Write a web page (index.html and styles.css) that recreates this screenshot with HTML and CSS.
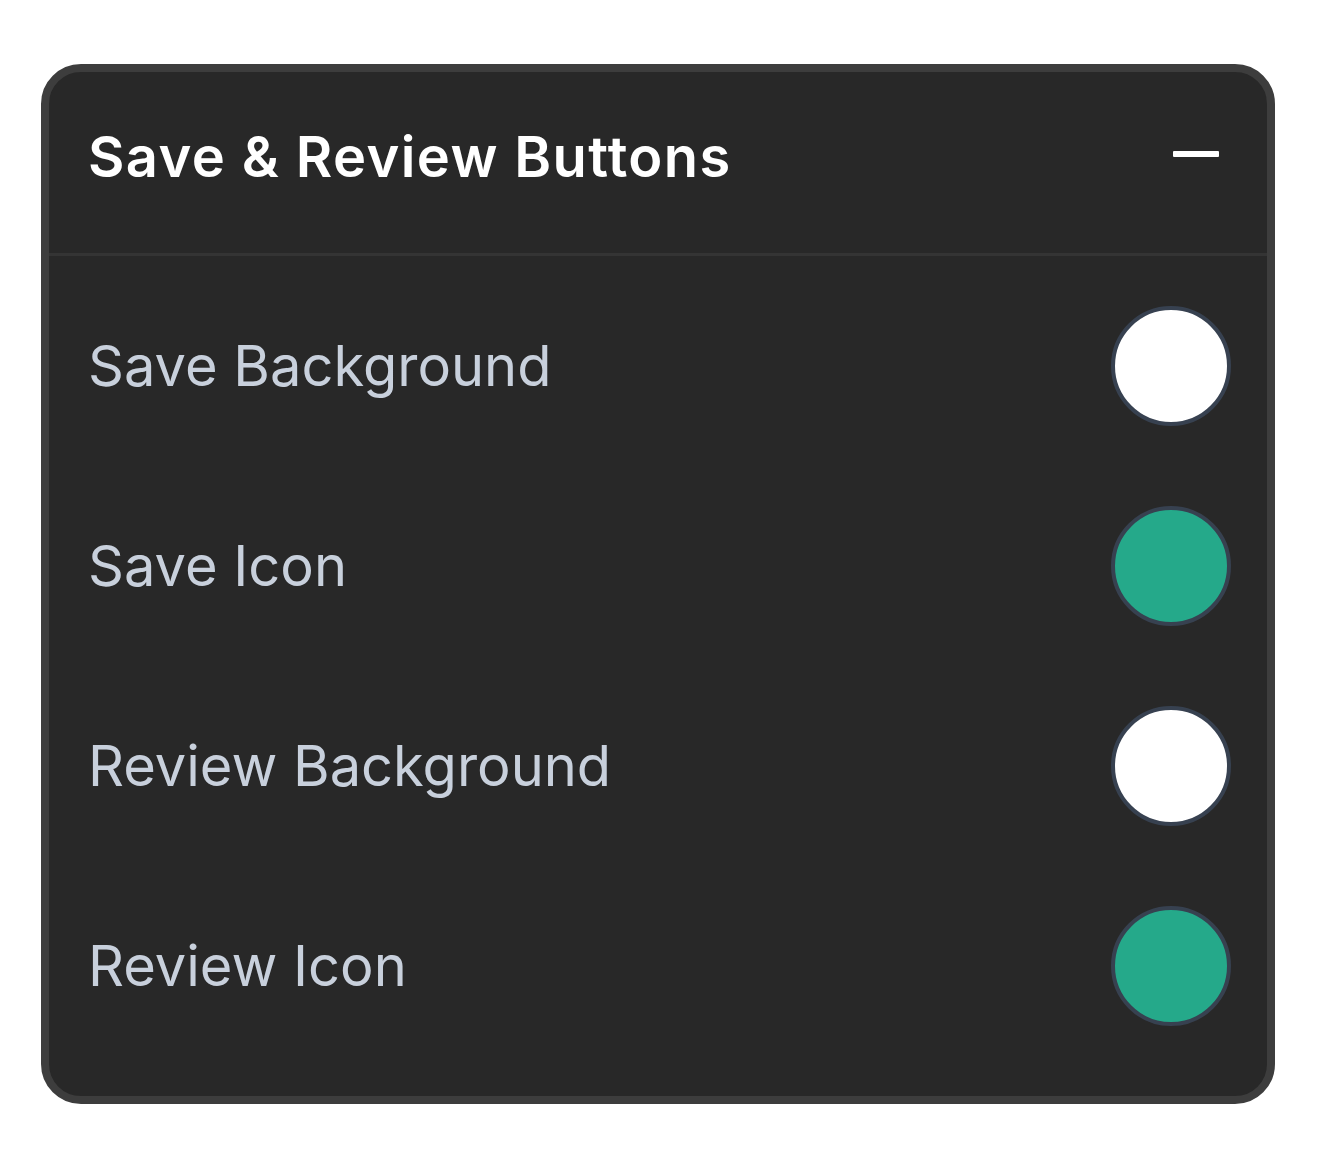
FILE: index.html
```html
<!DOCTYPE html>
<html lang="en">
<head>
<meta charset="utf-8">
<title>Save &amp; Review Buttons</title>
<link rel="stylesheet" href="styles.css">
</head>
<body>
<section class="card">
  <header class="card-header">
    <h2 class="card-title">Save &amp; Review Buttons</h2>
    <button class="collapse-btn" aria-label="Collapse">
      <svg width="46" height="8" viewBox="0 0 46 8"><rect x="0" y="1" width="46" height="6" rx="1" fill="#ffffff"/></svg>
    </button>
  </header>
  <div class="card-body">
    <div class="row">
      <span class="label">Save Background</span>
      <span class="swatch swatch-white"></span>
    </div>
    <div class="row">
      <span class="label">Save Icon</span>
      <span class="swatch swatch-teal"></span>
    </div>
    <div class="row">
      <span class="label">Review Background</span>
      <span class="swatch swatch-white"></span>
    </div>
    <div class="row">
      <span class="label">Review Icon</span>
      <span class="swatch swatch-teal"></span>
    </div>
  </div>
</section>
</body>
</html>
```

FILE: styles.css
```css
* { box-sizing: border-box; }

html, body {
  margin: 0;
  background: #ffffff;
}

body {
  padding: 64px 0 0 41px;
  font-family: Inter, "Liberation Sans", sans-serif;
}

.card {
  width: 1234px;
  height: 1040px;
  background: #282828;
  border: 8px solid #3d3d3d;
  border-radius: 40px;
  display: flex;
  flex-direction: column;
  overflow: hidden;
}

.card-header {
  height: 184px;
  display: flex;
  align-items: center;
  justify-content: space-between;
  padding: 0 48px 18px 39px;
  border-bottom: 3px solid #343434;
}

.card-title {
  margin: 0;
  color: #ffffff;
  font-size: 56px;
  font-weight: 600;
  letter-spacing: 1.4px;
  line-height: 1;
  position: relative;
  top: 3px;
}

.collapse-btn {
  background: none;
  border: 0;
  padding: 0;
  display: flex;
  align-items: center;
}

.card-body {
  padding: 50px 36px 0 39px;
  display: flex;
  flex-direction: column;
  gap: 80px;
}

.row {
  height: 120px;
  display: flex;
  align-items: center;
  justify-content: space-between;
}

.label {
  color: #c8d0dc;
  font-size: 56px;
  font-weight: 400;
  letter-spacing: 0;
  line-height: 1;
}

.swatch {
  width: 120px;
  height: 120px;
  border-radius: 50%;
  border: 4px solid #374150;
}

.swatch-white { background: #ffffff; }
.swatch-teal { background: #25a98a; }
```
